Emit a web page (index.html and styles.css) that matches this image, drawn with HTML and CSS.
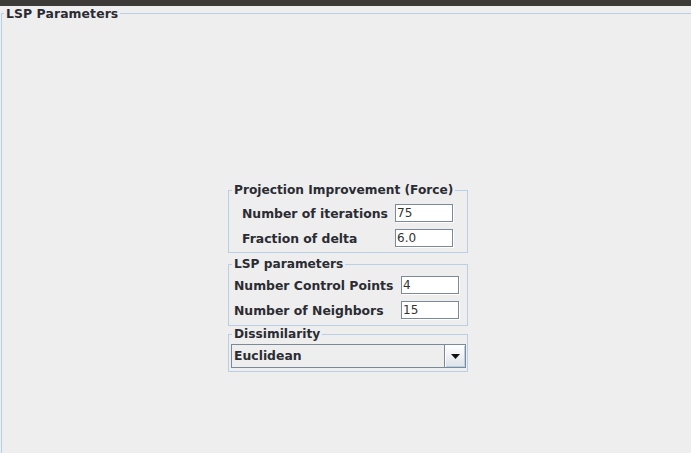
FILE: index.html
```html
<!DOCTYPE html>
<html>
<head>
<meta charset="utf-8">
<title>LSP Parameters</title>
<link rel="stylesheet" href="styles.css">
</head>
<body>
<div class="topbar"></div>
<fieldset class="outer">
  <legend class="outer-title">LSP Parameters</legend>
  <div class="group">
    <fieldset class="panel panel-force">
      <legend class="panel-title">Projection Improvement (Force)</legend>
      <div class="form form-force">
        <span class="label">Number of iterations</span>
        <span class="field">75</span>
        <span class="label">Fraction of delta</span>
        <span class="field">6.0</span>
      </div>
    </fieldset>
    <fieldset class="panel panel-lsp">
      <legend class="panel-title">LSP parameters</legend>
      <div class="form form-lsp">
        <span class="label">Number Control Points</span>
        <span class="field">4</span>
        <span class="label">Number of Neighbors</span>
        <span class="field">15</span>
      </div>
    </fieldset>
    <fieldset class="panel panel-dis">
      <legend class="panel-title">Dissimilarity</legend>
      <div class="combo">
        <span class="combo-text">Euclidean</span>
        <span class="combo-btn"><svg width="9" height="5" viewBox="0 0 9 5"><path d="M0 0H9L4.5 5Z" fill="#111"/></svg></span>
      </div>
    </fieldset>
  </div>
</fieldset>
</body>
</html>
```
FILE: styles.css
```css
html, body {
  margin: 0;
  padding: 0;
  background: #eeeeee;
  overflow: hidden;
  width: 691px;
  height: 453px;
  font-family: "DejaVu Sans", "Liberation Sans", sans-serif;
  color: #333333;
}
.topbar {
  height: 6px;
  background: #3c3b37;
}
fieldset {
  margin: 0;
  padding: 0;
  min-width: 0;
}
legend {
  font-weight: bold;
  font-size: 12.4px;
  line-height: 15px;
  color: #2b2b33;
}
.outer {
  margin-left: 1px;
  height: 447px;
  box-sizing: border-box;
  border: 1px solid #b8cfe5;
  border-right: none;
  border-bottom: none;
}
.outer-title {
  margin-left: 2px;
  padding: 0 2px;
  letter-spacing: 0.1px;
}
.group {
  padding-top: 162px;
  padding-left: 226px;
  display: flex;
  flex-direction: column;
  align-items: flex-start;
}
.panel {
  width: 240px;
  box-sizing: border-box;
  border: 1px solid #b8cfe5;
}
.panel-title {
  margin-left: 3px;
  padding: 0 2px;
  font-size: 12.2px;
}
.panel-lsp { margin-top: 4px; }
.panel-dis { margin-top: 1px; }
.form {
  display: grid;
  column-gap: 5px;
  row-gap: 7px;
  align-items: center;
}
.form-force {
  grid-template-columns: 148px 58px;
  padding: 6px 0 5px 13px;
}
.form-lsp {
  grid-template-columns: 162px 58px;
  padding: 4px 0 6px 5px;
}
.label {
  font-weight: bold;
  font-size: 12.4px;
  line-height: 15px;
  white-space: nowrap;
  color: #2b2b33;
}
.field {
  box-sizing: border-box;
  height: 18px;
  width: 58px;
  border: 1px solid #7a8a99;
  background: #ffffff;
  box-shadow: 1px 1px 0 #ffffff;
  font-size: 12px;
  line-height: 16px;
  padding-left: 1px;
  color: #333333;
}
.combo {
  margin: 2px 0 3px 2px;
  width: 235px;
  height: 24px;
  box-sizing: border-box;
  border: 1px solid #7a8a99;
  background: #eeeeee;
  display: flex;
  align-items: stretch;
}
.combo-text {
  flex: 1;
  font-weight: bold;
  font-size: 12.4px;
  line-height: 22px;
  padding-left: 2px;
  color: #2b2b33;
}
.combo-btn {
  width: 20px;
  border-left: 1px solid #7a8a99;
  background: linear-gradient(#ffffff, #dde3ea);
  box-shadow: inset 1px 1px 0 #ffffff, inset -1px -1px 0 #b8cfe5;
  display: flex;
  align-items: center;
  justify-content: center;
}
```
